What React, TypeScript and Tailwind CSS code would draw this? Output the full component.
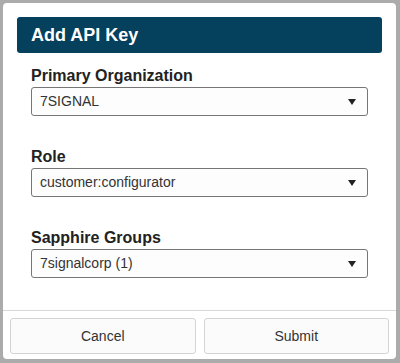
import { ReactNode } from 'react'

function Field({ label, value, className }: { label: string; value: string; className?: string }) {
    return (
        <div className={`flex flex-col ${className ?? ''}`}>
            <span className="text-[16px] leading-[18px] font-bold text-[#222]">{label}</span>
            <div className="mt-[2px] flex h-[29px] items-center justify-between rounded-[3px] border border-[#767676] bg-[#fdfdfd] pl-[8px] pr-[8px]">
                <span className="text-[14px] text-[#333]">{value}</span>
                <svg width="8" height="6" viewBox="0 0 8 6" className="mr-[3px]">
                    <path d="M0 0 L8 0 L4 6 Z" fill="#222" />
                </svg>
            </div>
        </div>
    )
}

function FooterButton({ children }: { children: ReactNode }) {
    return (
        <button className="flex h-[36px] flex-1 items-center justify-center rounded-[3px] border border-[#d3d3d3] bg-[#fbfbfb] text-[14px] text-[#333]">
            {children}
        </button>
    )
}

export default function App() {
    return (
        <div className="h-[363px] w-[400px] bg-[#ababab] pt-[3px] pl-[3px] pr-[4px] pb-[4px]" style={{ fontFamily: '"Liberation Sans", Arial, sans-serif' }}>
            <div className="flex h-full w-full flex-col rounded-[4px] bg-white">
                <div className="mx-[14px] mt-[14px] flex h-[36px] items-center rounded-[3px] bg-[#05405d] px-[14px]">
                    <span className="text-[18px] font-bold text-white">Add API Key</span>
                </div>

                <div className="flex flex-col px-[28px] pt-[14px]">
                    <Field label="Primary Organization" value="7SIGNAL" />
                    <Field label="Role" value="customer:configurator" className="mt-[32px]" />
                    <Field label="Sapphire Groups" value="7signalcorp (1)" className="mt-[32px]" />
                </div>

                <div className="mt-auto flex gap-[8px] border-t border-[#d8d8d8] px-[7px] pt-[7px] pb-[5px]">
                    <FooterButton>Cancel</FooterButton>
                    <FooterButton>Submit</FooterButton>
                </div>
            </div>
        </div>
    )
}
